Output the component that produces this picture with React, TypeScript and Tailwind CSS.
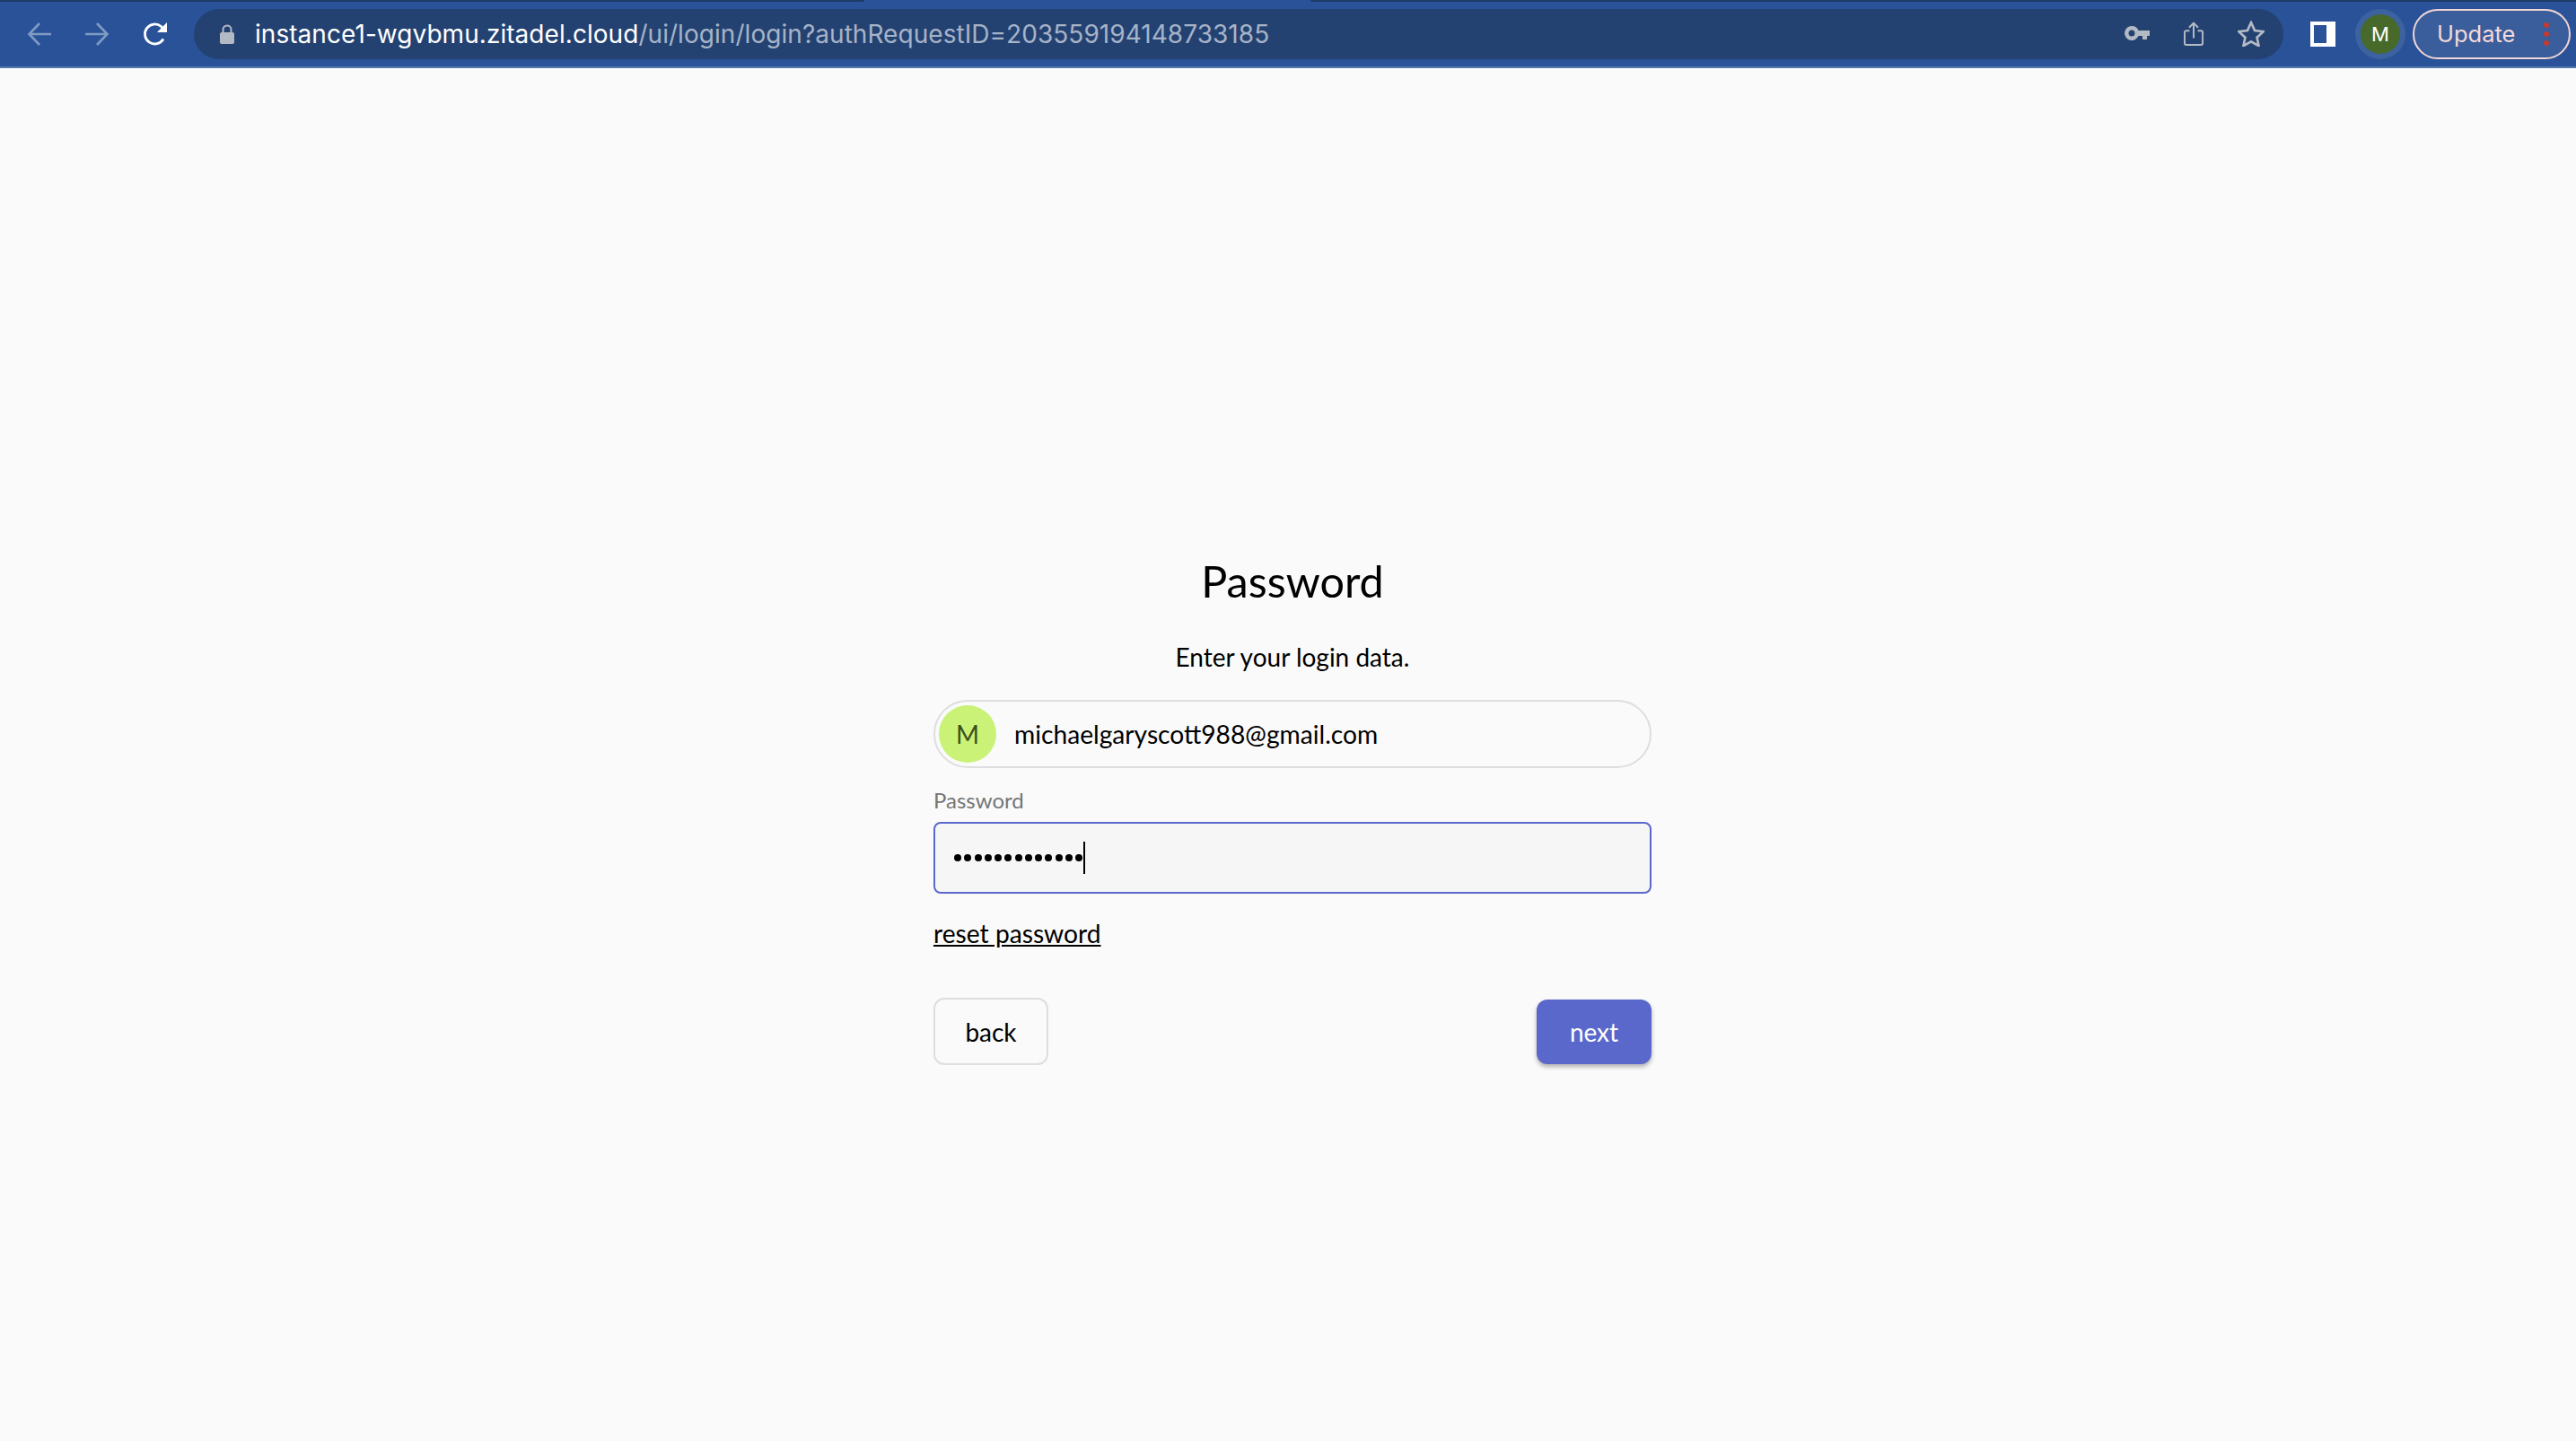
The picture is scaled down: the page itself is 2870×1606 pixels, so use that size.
export default function App() {
  return (
    <div className="min-h-[1606px] w-[2870px] bg-[#fafafa] flex flex-col font-['Lato',sans-serif] text-black">
      <header className="h-[76px] flex flex-col bg-[#2a5298] border-b-2 border-[#5277ab]">
        <div className="h-[2px] flex">
          <div className="w-[963px] bg-[#1e3a68] rounded-br-[2px]" />
          <div className="flex-1" />
          <div className="w-[1410px] bg-[#1e3a68] rounded-bl-[2px]" />
        </div>
        <div className="flex items-center h-[56px] mt-[8px]">
          <div className="w-[216px] pl-[30px] flex items-center gap-[38px] shrink-0">
            <svg width="27" height="28" viewBox="0 0 27 28" fill="none" stroke="#7f9bc3" strokeWidth="2.6"><path d="M27 14H3M14 2L2.500 14 14 26" /></svg>
            <svg width="27" height="28" viewBox="0 0 27 28" fill="none" stroke="#7f9bc3" strokeWidth="2.6"><path d="M0 14h24M13 2l11.500 12L13 26" /></svg>
            <svg width="28" height="28" viewBox="0 0 28 28" fill="none" className="-ml-[1px]"><path d="M23 19.500A11 11 0 1 1 20.500 5.500L24 9" stroke="#fff" strokeWidth="2.8" /><path d="M27 1v11H16z" fill="#fff" /></svg>
          </div>
          <div className="w-[2328px] h-[56px] rounded-full bg-[#234272] flex items-center shrink-0">
            <svg width="18" height="22" viewBox="0 0 18 22" className="ml-[28px]"><path d="M4.500 10V6a4.500 4.500 0 0 1 9 0v4" fill="none" stroke="#b4bac4" strokeWidth="2" /><rect x="1" y="9" width="16" height="13" rx="2" fill="#b4bac4" /></svg>
            <div className="ml-[22px] text-[28px] tracking-[0.05px] leading-none font-['Inter',sans-serif] whitespace-nowrap">
              <span className="text-white">instance1-wgvbmu.zitadel.cloud</span>
              <span className="text-[#a7b3c7]">/ui/login/login?authRequestID=203559194148733185</span>
            </div>
            <div className="ml-auto flex items-center pr-[21px] gap-[38px]">
              <svg width="28" height="16" viewBox="0 0 28 16" fill="#b4bac4" className="mb-[3px]"><path fillRule="evenodd" d="M8 0a8 8 0 0 1 7.500 5H28v6h-3v4h-5v-4h-4.500A8 8 0 1 1 8 0zm0 4.500a3.500 3.500 0 1 0 0 7 3.500 3.500 0 0 0 0-7z" /></svg>
              <svg width="22" height="30" viewBox="0 0 24 30" fill="none" stroke="#b4bac4" strokeWidth="2.200"><path d="M7 11H3a2 2 0 0 0-2 2v13a2 2 0 0 0 2 2h18a2 2 0 0 0 2-2V13a2 2 0 0 0-2-2h-4M12 20V2M6.500 7L12 1.500 17.500 7" /></svg>
              <svg width="30" height="29" viewBox="2 1.500 28 27" fill="none" stroke="#b4bac4" strokeWidth="2.500" className="mb-[1px]"><path d="M16 3.500l3.800 8.300 9 1-6.700 6.100 1.900 8.900L16 23.300 8 27.800l1.900-8.900L3.200 12.800l9-1z" /></svg>
            </div>
          </div>
          <div className="ml-[30px] w-[28px] h-[28px] bg-white flex items-center shrink-0 pl-[4px]">
            <div className="w-[14px] h-[20px] bg-[#2a5298]" />
          </div>
          <div className="ml-[22px] w-[56px] h-[56px] rounded-full bg-[#3c629f] flex items-center justify-center shrink-0">
            <div className="w-[44px] h-[44px] rounded-full bg-[#476a2b] text-white text-[22px] font-['Inter',sans-serif] flex items-center justify-center">M</div>
          </div>
          <div className="ml-[8px] w-[176px] h-[56px] rounded-full bg-[#3a5e9c] border-2 border-[#f3d6d6] flex items-center shrink-0 pl-[25px] font-['Inter',sans-serif]">
            <span className="text-[25.500px] text-[#f6d9d9] leading-none">Update</span>
            <div className="ml-[32px] flex flex-col gap-[4px]">
              <div className="w-[6px] h-[6px] rounded-full bg-[#c23a31]" />
              <div className="w-[6px] h-[6px] rounded-full bg-[#c23a31]" />
              <div className="w-[6px] h-[6px] rounded-full bg-[#c23a31]" />
            </div>
          </div>
        </div>
      </header>
      <main className="flex flex-col w-[800px] ml-[1040px] pt-[535px]">
        <h1 className="text-center text-[48.500px] leading-[72px] font-normal">Password</h1>
        <p className="text-center text-[28px] leading-[40px] mt-[29px]">Enter your login data.</p>
        <div className="mt-[28px] h-[76px] rounded-full border-2 border-[#dedede] flex items-center pl-[4px]">
          <div className="w-[64px] h-[64px] rounded-full bg-[#c9f277] text-[#3d4f1c] text-[28px] flex items-center justify-center">M</div>
          <span className="ml-[20px] text-[28.200px] leading-none">michaelgaryscott988@gmail.com</span>
        </div>
        <label className="mt-[22px] text-[24px] leading-[28px] text-[#757575]">Password</label>
        <div className="mt-[10px] h-[80px] rounded-[8px] border-2 border-[#5a68cc] bg-[#f6f6f6] flex items-center pl-[21px]">
          <div className="flex items-center gap-[3.250px]">
            {Array.from({ length: 13 }).map((_, i) => <div key={i} className="w-[8px] h-[8px] rounded-full bg-black" />)}
          </div>
          <div className="ml-[1px] w-[2px] h-[36px] bg-black" />
        </div>
        <a className="mt-[24px] text-[28.200px] leading-[40px] underline self-start">reset password</a>
        <div className="mt-[52px] flex justify-between items-center">
          <button className="w-[128px] h-[75px] rounded-[12px] border-2 border-[#dedede] text-[28px]">back</button>
          <button className="w-[128px] h-[72px] rounded-[12px] bg-[#5a68cc] text-white text-[28px] shadow-[0_3px_5px_rgba(0,0,0,0.3)]">next</button>
        </div>
      </main>
    </div>
  );
}
